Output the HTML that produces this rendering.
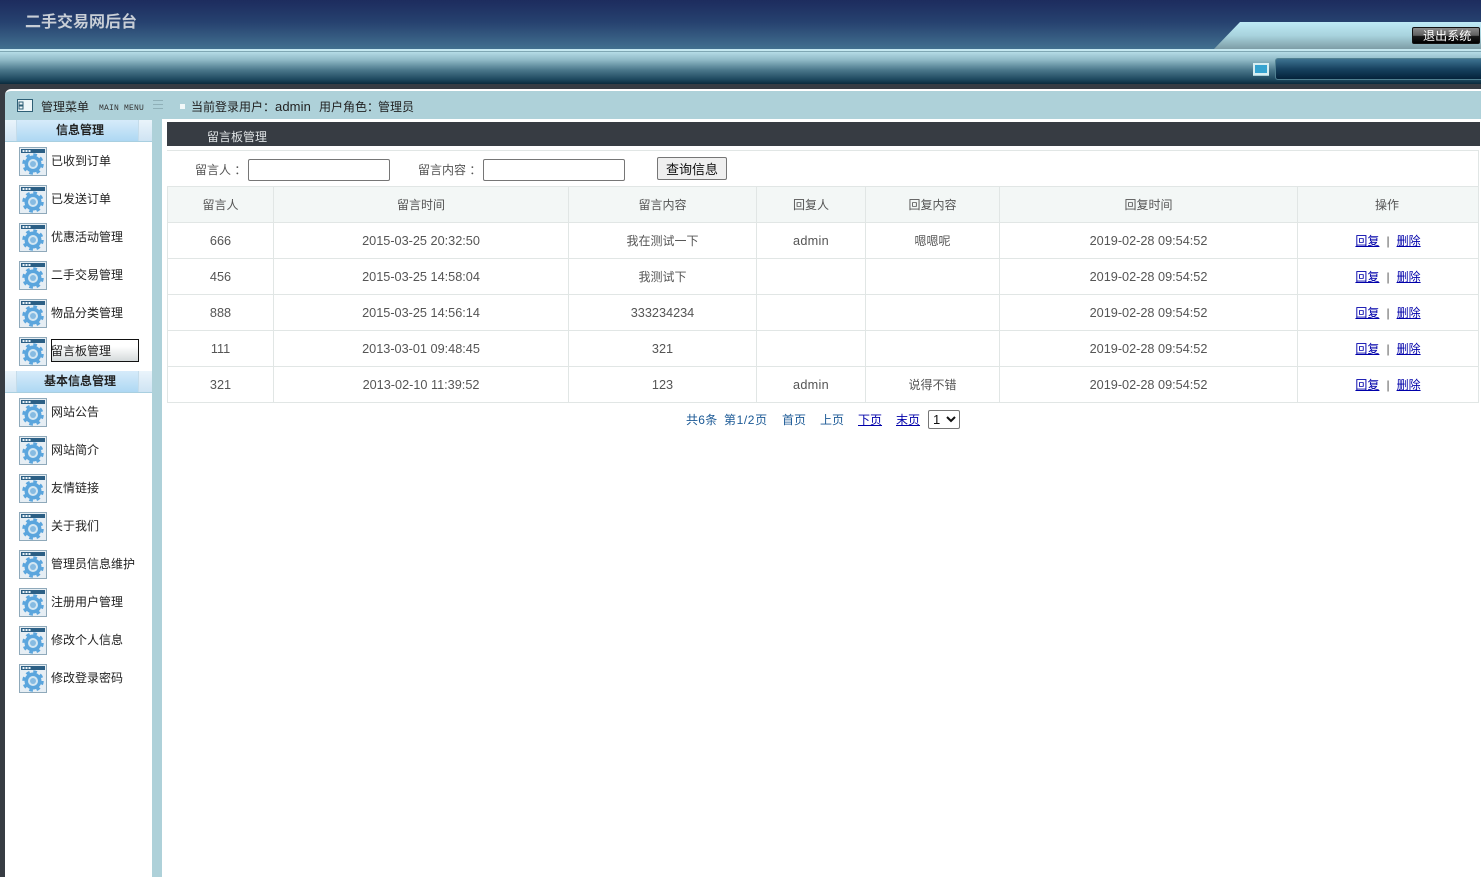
<!DOCTYPE html>
<html lang="zh"><head><meta charset="utf-8"><title>二手交易网后台</title>
<style>
*{box-sizing:border-box}
html,body{margin:0;padding:0;width:1481px;height:877px;overflow:hidden;background:#fff;font-family:"Liberation Sans","Noto Sans CJK SC",sans-serif;font-size:12px;color:#333}
.a{position:absolute}
.t{position:absolute;white-space:nowrap;line-height:20px}
.m{left:51px;color:#222;font-size:12px}
.ic{position:absolute;left:19px;width:28px;height:29px}
.sec{position:absolute;left:5px;width:147px;height:22px;background:linear-gradient(#eaf4fb,#cfe4f3);border-bottom:1px solid #a9cfe0}
.sec div{position:absolute;left:11px;width:123px;top:0;height:21px;padding-left:5px;background:linear-gradient(#d6ebfa,#aed8f3);border-left:1px solid #c5dcea;border-right:1px solid #c5dcea;text-align:center;font-weight:bold;color:#222;line-height:21px;font-size:12px}
.h,.c{position:absolute;text-align:center;line-height:20px;white-space:nowrap}
.h{color:#555}.c{color:#555;font-size:12.7px}
.z{font-size:12px}
.c a{font-size:12px}
.c i{font-style:normal;margin:0 7px;font-size:12px}
.ad{letter-spacing:.3px}
a{color:#00a;text-decoration:underline}
.ln{position:absolute;background:#e1e6e5}
input{position:absolute;height:22px;width:142px;border:1px solid #767676;border-radius:2px;background:#fff;padding:0;margin:0}
</style></head><body>
<svg width="0" height="0" style="position:absolute"><defs><symbol id="g" viewBox="0 0 28 29">
<rect x=".5" y=".5" width="27" height="28" fill="#e6eef4" stroke="#8fa9ba"/><rect x="2" y="2" width="24" height="4" fill="#2b5f85"/>
<rect x="3.500" y="3" width="2" height="2" fill="#e8f2f8"/><rect x="6.500" y="3" width="2" height="2" fill="#e8f2f8"/><rect x="9.500" y="3" width="2" height="2" fill="#e8f2f8"/>
<circle cx="14" cy="17" r="8.500" fill="#5aa5dd"/>
<circle cx="14" cy="17" r="9.500" fill="none" stroke="#5aa5dd" stroke-width="2.500" stroke-dasharray="3.730 3.730"/>
<circle cx="14" cy="17" r="5" fill="#d3e7f3"/><circle cx="14" cy="17" r="3" fill="#86bbe2"/>
</symbol></defs></svg>

<div class="a" style="left:0;top:0;width:1481px;height:49px;background:linear-gradient(#1d2c5e 0,#26416f 45%,#41708f 100%)"></div>
<div class="t" style="left:25px;top:9px;font-size:16px;line-height:24px;color:#c8ced6;font-weight:bold;transform:translateY(2px)">二手交易网后台</div>
<svg class="a" style="left:1210px;top:22px" width="271" height="27"><defs><linearGradient id="lg" x1="0" y1="0" x2="0" y2="1"><stop offset="0" stop-color="#bfeaf6"/><stop offset=".5" stop-color="#a8d3dd"/><stop offset="1" stop-color="#7d9da6"/></linearGradient></defs><path d="M30 0H271V27H4Z" fill="url(#lg)"/></svg>
<div class="a" style="left:1412px;top:27px;width:68px;height:17px;background:linear-gradient(#8a8a8a 0,#5e5e5e 50%,#1a1a1a 55%,#000 100%);border:1px solid #111;border-radius:2px"></div>
<div class="t" style="left:1423px;top:26px;color:#fff;font-size:12px;letter-spacing:.1px">退出系统</div>

<div class="a" style="left:0;top:49px;width:1481px;height:3px;background:#c5e8f0;border-bottom:1px solid #7fa7b3"></div>
<div class="a" style="left:0;top:52px;width:1481px;height:32px;background:linear-gradient(#b5dce6 0,#8fb9c6 25%,#4d7a8d 55%,#1f4a60 85%,#0b2a3c 100%)"></div>
<div class="a" style="left:1275px;top:58px;width:206px;height:22px;background:linear-gradient(#3e7391 0,#174260 50%,#04223a 100%);border:1px solid #4f7f90;border-right:0;border-radius:3px 0 0 3px"></div>
<div class="a" style="left:1253px;top:63px;width:16px;height:12px;background:#35a3d0;border:2px solid #d6eef2;box-shadow:0 1px 0 #a9cdd6"></div>
<div class="a" style="left:0;top:84px;width:1481px;height:5px;background:#373c43"></div>

<div class="a" style="left:0;top:89px;width:5px;height:788px;background:#373c43"></div>
<div class="a" style="left:5px;top:89px;width:8px;height:8px;background:#373c43"></div>
<div class="a" style="left:5px;top:89px;width:1476px;height:31px;background:#aed1d9;border-top:2px solid #fff;border-radius:6px 0 0 0"></div>
<div class="a" style="left:5px;top:120px;width:147px;height:757px;background:#fff"></div>
<div class="a" style="left:152px;top:119px;width:10px;height:758px;background:#aed1d9"></div>
<div class="a" style="left:162px;top:119px;width:1319px;height:758px;background:#fff"></div>

<svg class="a" style="left:17px;top:99px" width="16" height="14"><rect x=".5" y=".5" width="15" height="12" fill="#eef6f8" stroke="#2f5f75"/><rect x="2" y="3" width="4" height="3" fill="none" stroke="#2f5f75"/><rect x="2" y="7" width="4" height="3" fill="none" stroke="#2f5f75"/></svg>
<div class="t" style="left:41px;top:97px;color:#222">管理菜单</div>
<div class="t" style="left:99px;top:101px;font:8px/16px 'Liberation Mono',monospace;color:#333;letter-spacing:.2px">MAIN MENU</div>
<div class="a" style="left:153px;top:100px;width:10px;height:9px;border-top:1px solid #8fb0b8;border-bottom:1px solid #8fb0b8"></div>
<div class="a" style="left:153px;top:104px;width:10px;height:1px;background:#8fb0b8"></div>
<div class="a" style="left:180px;top:104px;width:5px;height:5px;background:#f2f8f9"></div>
<div class="t" style="left:191px;top:97px;color:#222">当前登录用户：<span style="font-size:13px;letter-spacing:.1px">admin</span></div>
<div class="t" style="left:319px;top:97px;color:#222">用户角色：</div>
<div class="t" style="left:378px;top:97px;color:#222">管理员</div>

<div class="sec" style="top:120px"><div>信息管理</div></div>
<svg class="ic" style="top:147px"><use href="#g"/></svg><div class="t m" style="top:151px">已收到订单</div>
<svg class="ic" style="top:185px"><use href="#g"/></svg><div class="t m" style="top:189px">已发送订单</div>
<svg class="ic" style="top:223px"><use href="#g"/></svg><div class="t m" style="top:227px">优惠活动管理</div>
<svg class="ic" style="top:261px"><use href="#g"/></svg><div class="t m" style="top:265px">二手交易管理</div>
<svg class="ic" style="top:299px"><use href="#g"/></svg><div class="t m" style="top:303px">物品分类管理</div>
<svg class="ic" style="top:337px"><use href="#g"/></svg>
<div class="a" style="left:51px;top:339px;width:88px;height:23px;border:1px solid #111;background:linear-gradient(#fff 30%,#d5dadb)"></div><div class="t m" style="top:341px">留言板管理</div>
<div class="sec" style="top:371px"><div>基本信息管理</div></div>
<svg class="ic" style="top:398px"><use href="#g"/></svg><div class="t m" style="top:402px">网站公告</div>
<svg class="ic" style="top:436px"><use href="#g"/></svg><div class="t m" style="top:440px">网站简介</div>
<svg class="ic" style="top:474px"><use href="#g"/></svg><div class="t m" style="top:478px">友情链接</div>
<svg class="ic" style="top:512px"><use href="#g"/></svg><div class="t m" style="top:516px">关于我们</div>
<svg class="ic" style="top:550px"><use href="#g"/></svg><div class="t m" style="top:554px">管理员信息维护</div>
<svg class="ic" style="top:588px"><use href="#g"/></svg><div class="t m" style="top:592px">注册用户管理</div>
<svg class="ic" style="top:626px"><use href="#g"/></svg><div class="t m" style="top:630px">修改个人信息</div>
<svg class="ic" style="top:664px"><use href="#g"/></svg><div class="t m" style="top:668px">修改登录密码</div>

<div class="a" style="left:167px;top:122px;width:1313px;height:24px;background:#373c43"></div>
<div class="t" style="left:207px;top:127px;color:#dfe3e5">留言板管理</div>

<div class="ln" style="left:167px;top:150px;width:1312px;height:1px"></div>
<div class="ln" style="left:1478px;top:150px;width:1px;height:253px"></div>
<div class="t" style="left:195px;top:160px;color:#555">留言人 ：</div>
<input type="text" style="left:248px;top:159px">
<div class="t" style="left:418px;top:160px;color:#555">留言内容 ：</div>
<input type="text" style="left:483px;top:159px">
<div class="a" style="left:657px;top:157px;width:70px;height:23px;background:#efefef;border:1px solid #767676;border-radius:2px;text-align:center;line-height:24px;font-size:13px;color:#111">查询信息</div>

<div class="a" style="left:167px;top:187px;width:1311px;height:35px;background:#f3f7f6"></div>
<div class="ln" style="left:167px;top:186px;width:1312px;height:1px"></div>
<div class="ln" style="left:167px;top:222px;width:1312px;height:1px"></div>
<div class="ln" style="left:167px;top:258px;width:1312px;height:1px"></div>
<div class="ln" style="left:167px;top:294px;width:1312px;height:1px"></div>
<div class="ln" style="left:167px;top:330px;width:1312px;height:1px"></div>
<div class="ln" style="left:167px;top:366px;width:1312px;height:1px"></div>
<div class="ln" style="left:167px;top:402px;width:1312px;height:1px"></div>
<div class="ln" style="left:167px;top:186px;width:1px;height:217px"></div>
<div class="ln" style="left:273px;top:186px;width:1px;height:217px"></div>
<div class="ln" style="left:568px;top:186px;width:1px;height:217px"></div>
<div class="ln" style="left:756px;top:186px;width:1px;height:217px"></div>
<div class="ln" style="left:865px;top:186px;width:1px;height:217px"></div>
<div class="ln" style="left:999px;top:186px;width:1px;height:217px"></div>
<div class="ln" style="left:1297px;top:186px;width:1px;height:217px"></div>

<div class="h" style="left:168px;width:105px;top:195px">留言人</div>
<div class="h" style="left:274px;width:294px;top:195px">留言时间</div>
<div class="h" style="left:569px;width:187px;top:195px">留言内容</div>
<div class="h" style="left:757px;width:108px;top:195px">回复人</div>
<div class="h" style="left:866px;width:133px;top:195px">回复内容</div>
<div class="h" style="left:1000px;width:297px;top:195px">回复时间</div>
<div class="h" style="left:1297px;width:180px;top:195px">操作</div>

<div class="c" style="left:168px;width:105px;top:231px">666</div>
<div class="c" style="left:274px;width:294px;top:231px">2015-03-25 20:32:50</div>
<div class="c z" style="left:569px;width:187px;top:231px">我在测试一下</div>
<div class="c ad" style="left:757px;width:108px;top:231px">admin</div>
<div class="c z" style="left:866px;width:133px;top:231px">嗯嗯呢</div>
<div class="c" style="left:1000px;width:297px;top:231px">2019-02-28 09:54:52</div>
<div class="c" style="left:1298px;width:180px;top:231px"><a href="#">回复</a><i>|</i><a href="#">删除</a></div>

<div class="c" style="left:168px;width:105px;top:267px">456</div>
<div class="c" style="left:274px;width:294px;top:267px">2015-03-25 14:58:04</div>
<div class="c z" style="left:569px;width:187px;top:267px">我测试下</div>
<div class="c" style="left:1000px;width:297px;top:267px">2019-02-28 09:54:52</div>
<div class="c" style="left:1298px;width:180px;top:267px"><a href="#">回复</a><i>|</i><a href="#">删除</a></div>

<div class="c" style="left:168px;width:105px;top:303px">888</div>
<div class="c" style="left:274px;width:294px;top:303px">2015-03-25 14:56:14</div>
<div class="c" style="left:569px;width:187px;top:303px">333234234</div>
<div class="c" style="left:1000px;width:297px;top:303px">2019-02-28 09:54:52</div>
<div class="c" style="left:1298px;width:180px;top:303px"><a href="#">回复</a><i>|</i><a href="#">删除</a></div>

<div class="c" style="left:168px;width:105px;top:339px">111</div>
<div class="c" style="left:274px;width:294px;top:339px">2013-03-01 09:48:45</div>
<div class="c" style="left:569px;width:187px;top:339px">321</div>
<div class="c" style="left:1000px;width:297px;top:339px">2019-02-28 09:54:52</div>
<div class="c" style="left:1298px;width:180px;top:339px"><a href="#">回复</a><i>|</i><a href="#">删除</a></div>

<div class="c" style="left:168px;width:105px;top:375px">321</div>
<div class="c" style="left:274px;width:294px;top:375px">2013-02-10 11:39:52</div>
<div class="c" style="left:569px;width:187px;top:375px">123</div>
<div class="c ad" style="left:757px;width:108px;top:375px">admin</div>
<div class="c z" style="left:866px;width:133px;top:375px">说得不错</div>
<div class="c" style="left:1000px;width:297px;top:375px">2019-02-28 09:54:52</div>
<div class="c" style="left:1298px;width:180px;top:375px"><a href="#">回复</a><i>|</i><a href="#">删除</a></div>

<div class="t" style="left:686px;top:410px;color:#1c5a96;letter-spacing:.3px">共6条</div>
<div class="t" style="left:724px;top:410px;color:#1c5a96;letter-spacing:.6px">第1/2页</div>
<div class="t" style="left:782px;top:410px;color:#1c5a96">首页</div>
<div class="t" style="left:820px;top:410px;color:#1c5a96">上页</div>
<div class="t" style="left:858px;top:410px"><a href="#">下页</a></div>
<div class="t" style="left:896px;top:410px"><a href="#">末页</a></div>
<select class="a" style="left:928px;top:410px;width:32px;height:19px;font-size:13px;font-family:'Liberation Sans',sans-serif;border:1px solid #767676;border-radius:2px;background:#fff;padding:0;color:#111"><option>1</option></select>
</body></html>
